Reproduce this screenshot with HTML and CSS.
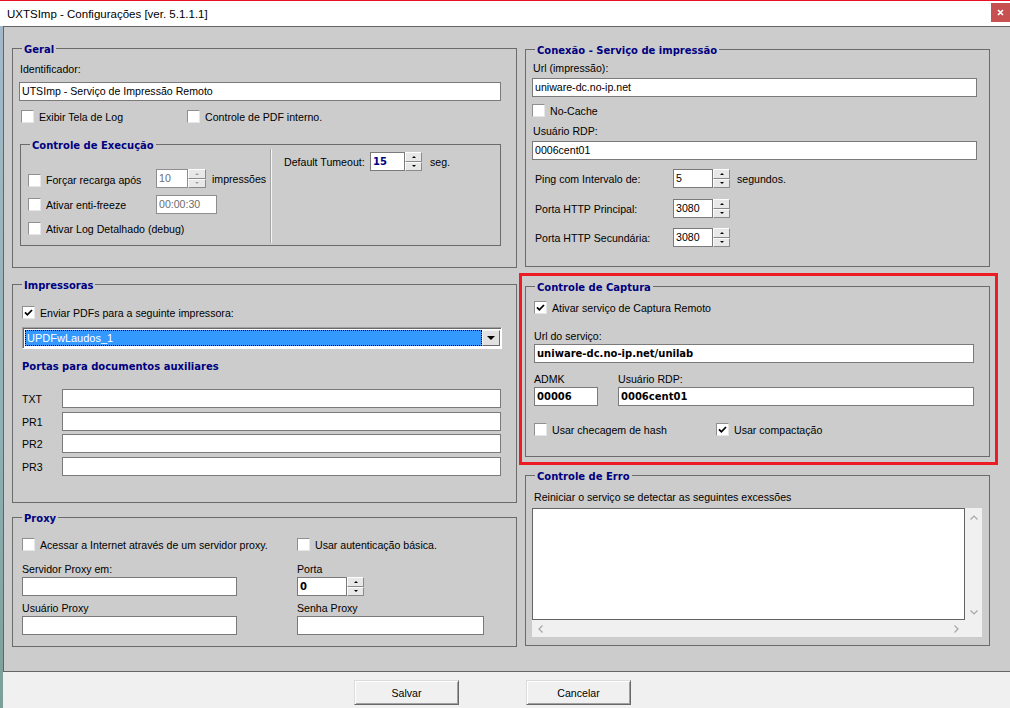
FILE: index.html
```html
<!DOCTYPE html>
<html lang="pt-BR">
<head>
<meta charset="utf-8">
<title>UXTSImp - Configurações</title>
<link rel="stylesheet" href="styles.css">
</head>
<body>
<header class="titlebar">
  <span class="wtitle">UXTSImp - Configurações [ver. 5.1.1.1]</span>
  <span class="close"><svg width="7" height="7" viewBox="0 0 7 7"><path d="M1 1L6 6M6 1L1 6" stroke="#fff" stroke-width="1.7"/></svg></span>
</header>
<div class="window">
  <div class="desk"></div>
  <div class="frame">
    <main class="panel">
      <div class="col col-left">
        <section class="group g-geral">
          <div class="gt">Geral</div>
          <div class="lbl l-ident">Identificador:</div>
          <div class="edit e-ident">UTSImp - Serviço de Impressão Remoto</div>
          <div class="row r-gchk">
            <div class="chk w166"><span class="box"></span>Exibir Tela de Log</div>
            <div class="chk"><span class="box"></span>Controle de PDF interno.</div>
          </div>
          <div class="group g-exec">
            <div class="exec-left">
              <div class="gt gt-exec">Controle de Execução</div>
              <div class="row r-e1">
                <div class="chk w128 low"><span class="box"></span>Forçar recarga após</div>
                <div class="spin dis">
                  <div class="sv w32">10</div>
                  <div class="sb w18"><span><i class="au"></i></span><span><i class="ad"></i></span></div>
                </div>
                <span class="unit u6">impressões</span>
              </div>
              <div class="row r-e2">
                <div class="chk w128"><span class="box"></span>Ativar enti-freeze</div>
                <div class="edit dis e-freeze">00:00:30</div>
              </div>
              <div class="row r-e3">
                <div class="chk"><span class="box"></span>Ativar Log Detalhado (debug)</div>
              </div>
            </div>
            <div class="exec-sep"></div>
            <div class="exec-right">
              <div class="row r-tout">
                <span class="w86">Default Tumeout:</span>
                <div class="spin">
                  <div class="sv w35 bold navy">15</div>
                  <div class="sb w17"><span><i class="au"></i></span><span><i class="ad"></i></span></div>
                </div>
                <span class="unit u8">seg.</span>
              </div>
            </div>
          </div>
        </section>

        <section class="group g-imp">
          <div class="gt">Impressoras</div>
          <div class="row r-imp1">
            <div class="chk"><span class="box"><svg width="9" height="9" viewBox="0 0 9 9"><path d="M1 4.3L3.4 6.8L8 2" fill="none" stroke="#000" stroke-width="1.8"/></svg></span>Enviar PDFs para a seguinte impressora:</div>
          </div>
          <div class="combo">
            <div class="csel">UPDFwLaudos_1</div>
            <div class="cbtn"><i class="tri"></i></div>
          </div>
          <div class="subt">Portas para documentos auxiliares</div>
          <div class="row r-port p-txt"><span class="w40">TXT</span><div class="edit e-port"></div></div>
          <div class="row r-port p-1"><span class="w40">PR1</span><div class="edit e-port"></div></div>
          <div class="row r-port p-2"><span class="w40">PR2</span><div class="edit e-port"></div></div>
          <div class="row r-port p-3"><span class="w40">PR3</span><div class="edit e-port"></div></div>
        </section>

        <section class="group g-proxy">
          <div class="gt">Proxy</div>
          <div class="row r-px1">
            <div class="chk w275"><span class="box"></span>Acessar a Internet através de um servidor proxy.</div>
            <div class="chk"><span class="box"></span>Usar autenticação básica.</div>
          </div>
          <div class="row r-pxl">
            <span class="lbl w275">Servidor Proxy em:</span>
            <span class="lbl">Porta</span>
          </div>
          <div class="row r-pxe">
            <div class="edit e-pxs"></div>
            <div class="spin">
              <div class="sv w50 bold">0</div>
              <div class="sb w17"><span><i class="au"></i></span><span><i class="ad"></i></span></div>
            </div>
          </div>
          <div class="row r-pxl r-pxl2">
            <span class="lbl w275">Usuário Proxy</span>
            <span class="lbl">Senha Proxy</span>
          </div>
          <div class="row r-pxe">
            <div class="edit e-pxs"></div>
            <div class="edit e-pxp"></div>
          </div>
        </section>
      </div>

      <div class="col col-right">
        <section class="group g-con">
          <div class="gt">Conexão - Serviço de impressão</div>
          <div class="lbl l-url">Url (impressão):</div>
          <div class="edit e-url">uniware-dc.no-ip.net</div>
          <div class="row r-nocache">
            <div class="chk"><span class="box"></span>No-Cache</div>
          </div>
          <div class="lbl l-rdp">Usuário RDP:</div>
          <div class="edit e-url e-rdp">0006cent01</div>
          <div class="row r-ping">
            <span class="w138">Ping com Intervalo de:</span>
            <div class="spin">
              <div class="sv w40">5</div>
              <div class="sb w17"><span><i class="au"></i></span><span><i class="ad"></i></span></div>
            </div>
            <span class="unit u7">segundos.</span>
          </div>
          <div class="row r-ping r-http1">
            <span class="w138">Porta HTTP Principal:</span>
            <div class="spin">
              <div class="sv w40">3080</div>
              <div class="sb w17"><span><i class="au"></i></span><span><i class="ad"></i></span></div>
            </div>
          </div>
          <div class="row r-ping r-http2">
            <span class="w138">Porta HTTP Secundária:</span>
            <div class="spin">
              <div class="sv w40">3080</div>
              <div class="sb w17"><span><i class="au"></i></span><span><i class="ad"></i></span></div>
            </div>
          </div>
        </section>

        <div class="redbox">
          <section class="group g-cap">
            <div class="gt">Controle de Captura</div>
            <div class="row r-cap1">
              <div class="chk"><span class="box"><svg width="9" height="9" viewBox="0 0 9 9"><path d="M1 4.3L3.4 6.8L8 2" fill="none" stroke="#000" stroke-width="1.8"/></svg></span>Ativar serviço de Captura Remoto</div>
            </div>
            <div class="lbl l-capurl">Url do serviço:</div>
            <div class="edit bold e-capurl">uniware-dc.no-ip.net/unilab</div>
            <div class="row r-caplbl">
              <span class="lbl w84">ADMK</span>
              <span class="lbl">Usuário RDP:</span>
            </div>
            <div class="row r-capedit">
              <div class="edit bold e-admk">00006</div>
              <div class="edit bold e-capusr">0006cent01</div>
            </div>
            <div class="row r-cap2">
              <div class="chk w182"><span class="box"></span>Usar checagem de hash</div>
              <div class="chk"><span class="box"><svg width="9" height="9" viewBox="0 0 9 9"><path d="M1 4.3L3.4 6.8L8 2" fill="none" stroke="#000" stroke-width="1.8"/></svg></span>Usar compactação</div>
            </div>
          </section>
        </div>

        <section class="group g-erro">
          <div class="gt">Controle de Erro</div>
          <div class="lbl l-erro">Reiniciar o serviço se detectar as seguintes excessões</div>
          <div class="memo">
            <div class="mtext"></div>
            <div class="vsb">
              <svg width="8" height="5" viewBox="0 0 8 5"><path d="M0.5 4.5L4 1L7.5 4.5" fill="none" stroke="#a6a6a6" stroke-width="1.2"/></svg>
              <svg width="8" height="5" viewBox="0 0 8 5"><path d="M0.5 0.5L4 4L7.5 0.5" fill="none" stroke="#a6a6a6" stroke-width="1.2"/></svg>
            </div>
            <div class="hsb">
              <svg width="5" height="8" viewBox="0 0 5 8"><path d="M4.5 0.5L1 4L4.5 7.5" fill="none" stroke="#a6a6a6" stroke-width="1.2"/></svg>
              <svg width="5" height="8" viewBox="0 0 5 8"><path d="M0.5 0.5L4 4L0.5 7.5" fill="none" stroke="#a6a6a6" stroke-width="1.2"/></svg>
            </div>
            <div class="corner"></div>
          </div>
        </section>
      </div>
    </main>
    <footer class="footer">
      <div class="btn">Salvar</div>
      <div class="btn btn-2">Cancelar</div>
    </footer>
  </div>
</div>
</body>
</html>
```

FILE: styles.css
```css
* { box-sizing: border-box; }
html, body { margin: 0; padding: 0; }
body {
  width: 1010px; height: 708px; overflow: hidden; background: #fff;
  font-family: "Liberation Sans", Arial, sans-serif; font-size: 10.6px; color: #000;
}
i { display: block; }

.titlebar {
  height: 26px; border-top: 1px solid #e81123; background: #fff;
  display: flex; align-items: center; padding-left: 7px;
}
.wtitle { flex: 1; font-size: 11.5px; color: #000; }
.close {
  align-self: flex-start; margin-top: 2px; width: 19px; height: 19px;
  background: #c75050; display: flex; align-items: center; justify-content: center;
}

.window { display: flex; height: 682px; }
.desk { width: 3px; background: linear-gradient(#a3b9c9, #8fb0b4 60%, #7d9f98); }
.frame { flex: 1; display: flex; flex-direction: column; }
.panel {
  height: 646px; background: #cccccc; border: 1px solid #646464; border-right: 0;
  padding: 21px 0 0 8px; display: flex; gap: 8px;
}
.footer { flex: 1; background: #f0f0f0; padding: 8px 0 0 351px; display: flex; align-items: flex-start; }
.btn {
  width: 105px; height: 25px; background: #f0f0f0; border: 1px solid;
  border-color: #dcdcdc #696969 #696969 #dcdcdc;
  box-shadow: inset 1px 1px #fff, inset -1px -1px #a0a0a0;
  display: flex; align-items: center; justify-content: center;
}
.btn-2 { margin-left: 67px; }

.col { display: flex; flex-direction: column; }
.col-left { width: 505px; }
.col-right { width: 465px; padding-top: 1px; }

.group { border: 1px solid #6b6b6b; padding: 0 6px; flex: none; }
.gt {
  width: max-content; height: 14px; line-height: 14px; margin: -6px 0 0 3px; padding: 0 2px;
  background: #cccccc; color: #000080;
  font-family: "DejaVu Sans", Verdana, sans-serif; font-weight: bold; font-size: 10px;
}
.subt {
  height: 14px; line-height: 14px; margin-top: 11px; padding-left: 3px; color: #000080;
  font-family: "DejaVu Sans", Verdana, sans-serif; font-weight: bold; font-size: 10px;
}

.lbl { height: 13px; line-height: 13px; white-space: nowrap; }
.row { display: flex; align-items: center; white-space: nowrap; }
.edit {
  height: 19px; line-height: 17px; border: 1px solid #7a7a7a; background: #fff;
  padding: 0 2px; white-space: nowrap; overflow: hidden;
}
.bold { font-family: "DejaVu Sans", Verdana, sans-serif; font-weight: bold; font-size: 10px; }
.navy { color: #000080; }
.dis { color: #6d6d6d; }
.edit.dis { border-color: #8e8e8e; }

.chk { display: flex; align-items: center; height: 13px; }
.box {
  width: 13px; height: 13px; background: #fff; border: 1px solid;
  border-color: #8f8f8f #e6e6e6 #e6e6e6 #8f8f8f; margin-right: 5px; flex: none;
  display: flex; align-items: center; justify-content: center;
}
.low { padding-top: 3px; height: 16px; }

.w17 { width: 17px; } .w18 { width: 18px; } .w32 { width: 32px; } .w35 { width: 35px; }
.w40 { width: 40px; flex: none; } .w50 { width: 50px; } .w84 { width: 84px; } .w86 { width: 86px; }
.w128 { width: 128px; } .w138 { width: 138px; } .w166 { width: 166px; } .w182 { width: 182px; }
.w275 { width: 275px; }
.unit.u6 { margin-left: 6px; } .unit.u7 { margin-left: 7px; } .unit.u8 { margin-left: 8px; }

.spin { display: flex; height: 19px; }
.sv { height: 19px; line-height: 17px; border: 1px solid #7a7a7a; background: #fff; padding: 0 2px; }
.spin.dis .sv { border-color: #8e8e8e; }
.sb { display: flex; flex-direction: column; height: 19px; }
.sb span {
  flex: 1; background: #e8e8e8; border: 1px solid;
  border-color: #fdfdfd #8a8a8a #8a8a8a #fdfdfd;
  display: flex; align-items: center; justify-content: center;
}
.au { width: 0; height: 0; border-left: 2px solid transparent; border-right: 2px solid transparent; border-bottom: 2px solid #000; }
.ad { width: 0; height: 0; border-left: 2px solid transparent; border-right: 2px solid transparent; border-top: 2px solid #000; }
.spin.dis .au { border-bottom-color: #a0a0a0; }
.spin.dis .ad { border-top-color: #a0a0a0; }

/* Geral */
.g-geral { height: 220px; }
.l-ident { margin-top: 6px; padding-left: 1px; }
.e-ident { margin-top: 6px; width: 482px; }
.r-gchk { margin-top: 9px; height: 13px; padding-left: 2px; }
.g-exec { margin: 21px 0 0 1px; width: 481px; height: 102px; padding: 4px 0 2px 7px; display: flex; }
.exec-left { width: 242px; }
.gt-exec { margin: -10px 0 0 2px; }
.exec-sep { width: 2px; border-left: 1px solid #a4a4a4; border-right: 1px solid #f6f6f6; }
.exec-right { flex: 1; padding: 3px 0 0 12px; }
.r-e1 { margin-top: 16px; height: 19px; }
.r-e2 { margin-top: 7px; height: 19px; }
.r-e3 { margin-top: 8px; height: 13px; }
.e-freeze { width: 61px; }
.r-tout { height: 19px; }

/* Impressoras */
.g-imp { height: 219px; margin-top: 16px; }
.r-imp1 { margin-top: 13px; height: 13px; padding-left: 3px; }
.combo {
  margin: 8px 0 0 3px; width: 480px; height: 22px; display: flex; background: #fff;
  border: 1px solid; border-color: #a0a0a0 #fff #fff #a0a0a0;
  box-shadow: inset 1px 1px #696969;
  padding: 2px 1px 2px 2px;
}
.csel {
  flex: 1; background: #3399ff; color: #fff; border: 1px dotted #000;
  padding-left: 1px; line-height: 14px; font-size: 11px;
}
.cbtn {
  width: 18px; background: #e1e1e1; border: 1px solid;
  border-color: #f4f4f4 #696969 #696969 #f4f4f4;
  display: flex; align-items: center; justify-content: center;
}
.tri { width: 0; height: 0; border-left: 4px solid transparent; border-right: 4px solid transparent; border-top: 4px solid #000; }
.r-port { padding-left: 3px; height: 19px; }
.e-port { width: 439px; }
.p-txt { margin-top: 15px; } .p-1 { margin-top: 4px; } .p-2 { margin-top: 3px; } .p-3 { margin-top: 4px; }

/* Proxy */
.g-proxy { height: 130px; margin-top: 14px; }
.r-px1 { margin-top: 12px; height: 13px; padding-left: 3px; }
.r-pxl { margin-top: 12px; padding-left: 3px; height: 13px; }
.r-pxl2 { margin-top: 6px; }
.r-pxe { margin-top: 1px; padding-left: 3px; height: 19px; }
.e-pxs { width: 215px; margin-right: 60px; }
.e-pxp { width: 187px; }

/* Conexão */
.g-con { height: 218px; }
.l-url { margin-top: 4px; padding-left: 1px; }
.e-url { margin-top: 3px; width: 445px; }
.r-nocache { margin-top: 7px; height: 13px; }
.l-rdp { margin-top: 8px; padding-left: 1px; }
.r-ping { margin-top: 9px; height: 19px; padding-left: 3px; }
.r-http1 { margin-top: 11px; }
.r-http2 { margin-top: 10px; }

/* Captura */
.redbox { margin: 6px -8px 0 -6px; border: 3px solid #ed1c24; padding: 10px 5px 5px 3px; }
.g-cap { height: 171px; }
.r-cap1 { margin-top: 6px; height: 13px; padding-left: 2px; }
.l-capurl { margin-top: 16px; padding-left: 2px; }
.e-capurl { margin: 1px 0 0 2px; width: 440px; }
.r-caplbl { margin-top: 10px; padding-left: 2px; height: 13px; }
.r-capedit { margin-top: 1px; padding-left: 2px; gap: 20px; }
.e-admk { width: 64px; }
.e-capusr { width: 356px; }
.r-cap2 { margin-top: 17px; height: 13px; padding-left: 2px; }

/* Erro */
.g-erro { height: 171px; margin-top: 10px; }
.l-erro { margin-top: 7px; padding-left: 2px; }
.memo { margin-top: 4px; display: grid; grid-template-columns: 433px 17px; grid-template-rows: 112px 17px; }
.mtext { background: #fff; border: 1px solid #646464; }
.vsb {
  background: #f0f0f0; display: flex; flex-direction: column; justify-content: space-between;
  align-items: center; padding: 7px 0 5px;
}
.hsb {
  background: #f0f0f0; display: flex; justify-content: space-between; align-items: center;
  padding: 0 6px;
}
.corner { background: #f0f0f0; }
```
